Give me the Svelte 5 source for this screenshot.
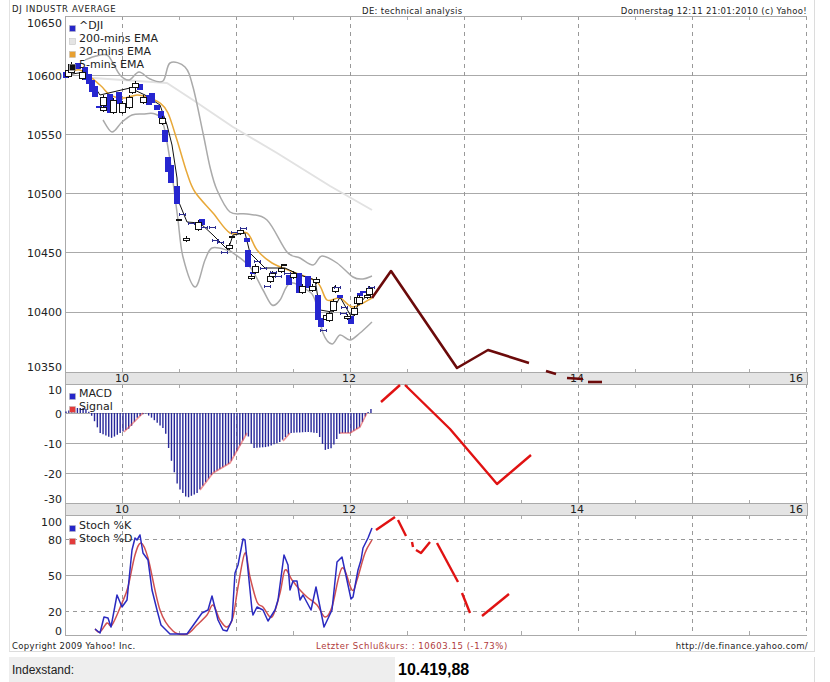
<script>
  // chart coordinates are page pixels, the svg viewBox starts at the frame's left edge
  const verticals = [122, 236, 350, 464, 578, 692, 806];
  const ticks = [179, 293, 407, 521, 635, 749];
  const panels = [[16, 372], [384, 503], [515, 635]];
  const bands = [372, 503];

  const priceGrid = [75, 134, 193, 252, 312];
  const macdGrid = [413, 443, 473];
  const priceLabels = [["10650", 27], ["10600", 80], ["10550", 139], ["10500", 198], ["10450", 257], ["10400", 316], ["10350", 371]];
  const macdLabels = [["10", 394], ["0", 418], ["-10", 448], ["-20", 478], ["-30", 503]];
  const stochLabels = [["100", 526], ["80", 544], ["50", 580], ["20", 616], ["0", 635]];
  const hours = [["10", 122], ["12", 349], ["14", 577], ["16", 796]];

  const upper = "85,60 96,56 107,55 113,63 120,75 129,80 139,72 150,79 163,81 170,63 185,67 193,87 203,133 210,167 217,190 230,212 247,214 267,220 287,252 300,258 313,265 322,256 337,263 353,277 363,279 372,276";
  const lower = "103,120 112,132 122,122 132,115 143,114 155,114 163,123 170,160 175,197 178,220 183,257 195,287 205,260 212,248 227,250 233,253 250,267 263,290 272,305 280,300 290,283 307,290 315,300 323,333 332,344 340,335 350,340 360,333 372,322";
  const ema20 = "67,75 80,70 100,85 110,95 123,98 137,95 147,97 160,103 168,113 177,140 187,173 195,192 213,213 230,233 247,233 257,250 272,263 293,272 317,282 327,300 340,298 353,307 372,298";
  const ema200 = "93,78 167,83 193,100 233,127 277,153 330,186 372,210";
  const ema5 = "66,75 85,72 100,95 130,88 145,95 160,105 167,125 172,145 177,178 178,200 187,222 200,223 213,235 228,250 233,235 245,233 250,253 265,268 285,268 300,275 315,280 320,310 332,312 340,297 352,318 358,305 372,290";

  const filled = [
    [66, 72, 78], [78, 63, 69], [85, 67, 80], [89, 74, 84], [92, 80, 92], [95, 86, 97], [99, 106, 108], [107, 106, 109],
    [110, 94, 113], [119, 92, 104], [140, 84, 90], [149, 95, 105], [152, 93, 103], [157, 105, 110], [161, 111, 118], [165, 130, 142],
    [168, 157, 172], [171, 165, 183], [177, 186, 204], [202, 219, 225], [247, 238, 242], [248, 250, 267],
    [253, 272, 274], [289, 275, 285], [299, 273, 293], [308, 276, 288], [318, 295, 320], [321, 318, 327],
    [340, 295, 298], [351, 316, 324], [360, 293, 296], [363, 291, 293]
  ];
  const hollow = [
    [68, 70, 76], [71, 64, 72], [82, 72, 78], [103, 97, 105], [103, 107, 110], [113, 100, 112], [122, 103, 112],
    [129, 97, 107], [132, 87, 92], [135, 83, 87], [143, 97, 102], [162, 118, 123], [198, 222, 229],
    [186, 238, 240], [229, 245, 248], [240, 230, 233], [251, 276, 278], [255, 266, 272], [270, 276, 281], [272, 273, 276],
    [281, 268, 271], [293, 273, 277], [302, 286, 292], [312, 286, 290], [316, 279, 282], [326, 315, 319], [329, 313, 320],
    [333, 301, 310], [335, 287, 291], [347, 316, 318], [354, 308, 314], [357, 297, 303], [359, 297, 303], [367, 295, 297], [369, 288, 294]
  ];
  const dojis = [
    [182, 214], [191, 223], [204, 227], [212, 227], [215, 240], [220, 242], [224, 252], [234, 232], [243, 228],
    [257, 261], [263, 268], [267, 286], [273, 272], [278, 276], [287, 273], [323, 330], [337, 287], [344, 307], [343, 313], [371, 287]
  ];
  const flats = [[179, 219], [232, 236], [284, 264]];

  // price forecast, broken where it runs into the band
  const forecast = ["372,298 391,271 457,368 488,350 529,363", "546,371 556,374", "567,378 583,379", "588,382 602,382"];
  const macdForecast = ["381,402 400,385", "405,385 450,429 497,484 531,455"];
  const stochForecast = ["376,530 395,517", "398,520 406,536", "412,542 413,547", "416,550 421,553 430,542", "437,543 458,582", "462,593 470,613", "482,616 509,594"];

  const macdEdge = [[65, 412], [75, 408], [85, 408], [90, 413], [93, 418], [100, 433], [112, 438], [122, 432], [130, 428], [137, 418], [145, 413], [152, 418], [165, 430], [170, 455], [178, 487], [187, 498], [197, 493], [213, 473], [230, 463], [247, 433], [253, 448], [267, 447], [280, 442], [290, 433], [307, 432], [318, 433], [325, 450], [332, 448], [340, 433], [350, 433], [360, 427], [367, 413], [372, 408]];
  // signal only shows where it leaves the bars
  const signal = ["124,432 132,424 143,413", "200,490 213,473 230,463 247,433", "283,441 290,433", "340,433 350,433 360,427 367,413"];

  function edgeAt(x) {
    for (let i = 1; i < macdEdge.length; i++) {
      const [x0, y0] = macdEdge[i - 1];
      const [x1, y1] = macdEdge[i];
      if (x <= x1) return y0 + ((y1 - y0) * (x - x0)) / (x1 - x0);
    }
    return 413;
  }
  const bars = [];
  for (let x = 66; x <= 372; x += 2.85) bars.push({ x, y: edgeAt(x) });

  const stochK = "95,629 100,633 104,617 108,618 111,627 117,595 122,607 127,600 132,550 135,538 137,540 140,535 143,553 148,560 152,590 157,610 161,625 170,634 187,634 192,627 202,613 208,610 212,596 218,620 223,630 227,631 232,620 235,573 238,565 243,539 245,540 252,610 253,615 257,607 263,610 268,621 275,610 278,600 284,555 288,565 290,590 293,581 297,581 300,600 303,595 311,610 316,587 324,627 332,610 337,562 342,557 351,599 353,597 358,570 361,560 363,548 368,538 372,528";
  const stochD = "95,629 100,632 107,623 112,625 122,603 128,587 135,555 141,543 148,558 160,610 173,631 187,634 197,625 207,615 213,605 220,620 227,627 233,617 238,587 245,553 250,577 257,602 263,607 272,617 280,593 285,570 292,580 300,590 307,597 317,605 325,617 332,607 342,568 352,590 357,580 365,553 372,540";

  // catmull-rom through the points, for the lines that are smooth in the chart
  function smooth(points) {
    const p = points.split(" ").map((s) => s.split(",").map(Number));
    let d = `M${p[0][0]} ${p[0][1]}`;
    for (let i = 0; i < p.length - 1; i++) {
      const a = p[i - 1] || p[i];
      const b = p[i];
      const c = p[i + 1];
      const e = p[i + 2] || c;
      const c1 = [b[0] + (c[0] - a[0]) / 6, b[1] + (c[1] - a[1]) / 6];
      const c2 = [c[0] - (e[0] - b[0]) / 6, c[1] - (e[1] - b[1]) / 6];
      d += `C${c1[0]} ${c1[1]} ${c2[0]} ${c2[1]} ${c[0]} ${c[1]}`;
    }
    return d;
  }

  const legends = [
    { label: "^DJI", color: "#2626c8", y: 29 },
    { label: "200-mins EMA", color: "#e4e4e4", y: 42 },
    { label: "20-mins EMA", color: "#e8a030", y: 55 },
    { label: "5-mins EMA", color: "#111", y: 68 },
    { label: "MACD", color: "#2626c8", y: 397 },
    { label: "Signal", color: "#e23a3a", y: 410 },
    { label: "Stoch %K", color: "#2626c8", y: 529 },
    { label: "Stoch %D", color: "#e23a3a", y: 542 }
  ];
</script>

<div class="page">
  <div class="frame">
    <svg viewBox="9 0 806 652" width="806" height="652">
      <!-- grid -->
      {#each priceGrid as y}<line class="grid" x1="65" x2="807" y1={y} y2={y} />{/each}
      {#each macdGrid as y}<line class="grid" x1="65" x2="807" y1={y} y2={y} />{/each}
      <line class="grid" x1="65" x2="807" y1="575" y2="575" />
      <line class="dash" x1="65" x2="807" y1="539" y2="539" />
      <line class="dash" x1="65" x2="807" y1="611" y2="611" />
      {#each panels as [top, bottom]}
        {#each verticals as x}<line class="dash" x1={x} x2={x} y1={top} y2={bottom} />{/each}
        {#each ticks as x}<line class="grid" x1={x} x2={x} y1={top} y2={top + 4} />{/each}
      {/each}
      {#each ticks as x}<line class="grid" x1={x} x2={x} y1="631" y2="635" />{/each}

      <!-- time bands -->
      {#each bands as y}
        <rect class="band" x="65" y={y} width="742" height="12" />
        {#each verticals.concat(ticks) as x}<line class="grid" x1={x} x2={x} y1={y - 3} y2={y} />{/each}
      {/each}
      {#each bands as y}
        {#each hours as [t, x]}<text class="hour" x={x} y={y + 10}>{t}</text>{/each}
      {/each}

      <line class="axis" x1="65" x2="807" y1="16" y2="16" />
      <line class="axis" x1="65" x2="807" y1="635" y2="635" />
      <line class="axis" x1="65" x2="65" y1="16" y2="635" />

      <!-- price panel -->
      <polyline class="series" stroke="#e2e2e2" stroke-width="2" points={ema200} />
      <path class="series" stroke="#aaa" stroke-width="1.5" d={smooth(upper)} />
      <path class="series" stroke="#aaa" stroke-width="1.5" d={smooth(lower)} />
      <path class="series" stroke="#e8a838" stroke-width="1.5" d={smooth(ema20)} />
      <polyline class="series" stroke="#111" stroke-width="1" points={ema5} />
      {#each filled as [x, top, bottom]}
        <rect class="crisp" x={x - 3} y={top} width="6" height={bottom - top} fill="#2626d0" />
      {/each}
      {#each hollow as [x, top, bottom]}
        <line class="crisp" x1={x} x2={x} y1={top - 2} y2={bottom + 2} stroke="#111" />
        <rect class="crisp" x={x - 3} y={top} width="6" height={bottom - top} fill="#fff" stroke="#111" />
      {/each}
      {#each dojis as [x, y]}
        <path class="crisp" d="M{x - 3} {y}h6M{x - 3} {y - 1}v3M{x + 3} {y - 1}v3" fill="none" stroke="#2c2c90" />
      {/each}
      {#each flats as [x, y]}<rect class="crisp" x={x - 3} y={y} width="6" height="2" fill="#111" />{/each}
      {#each forecast as points}
        <polyline class="series" stroke="#6b0a0a" stroke-width="2.6" points={points} />
      {/each}

      <!-- macd panel -->
      {#each bars as bar}
        <line x1={bar.x} x2={bar.x} y1="413" y2={bar.y} stroke="#27279a" stroke-width="1.4" />
      {/each}
      {#each signal as points}
        <polyline class="series" stroke="#e85050" stroke-width="1.6" opacity="0.6" points={points} />
      {/each}
      {#each macdForecast as points}
        <polyline class="series" stroke="#e01212" stroke-width="2.4" points={points} />
      {/each}

      <!-- stochastic panel -->
      <path class="series" stroke="#d05050" stroke-width="1.5" d={smooth(stochD)} />
      <polyline class="series" stroke="#2a2ac0" stroke-width="1.5" points={stochK} />
      {#each stochForecast as points}
        <polyline class="series" stroke="#e01212" stroke-width="2.4" points={points} />
      {/each}

      <!-- labels -->
      {#each priceLabels.concat(macdLabels, stochLabels) as [label, y]}
        <text class="scale" x="62" y={y}>{label}</text>
      {/each}
      {#each legends as item}
        <rect class="swatch" x="69.5" y={item.y - 3.5} width="6" height="6" fill={item.color} />
        <text class="legend" x="79" y={item.y}>{item.label}</text>
      {/each}

      <text class="tiny title" x="12" y="12">DJ INDUSTR AVERAGE</text>
      <text class="tiny mid" x="362" y="14">DE: technical analysis</text>
      <text class="tiny end mid" x="807" y="14">Donnerstag 12:11 21:01:2010 (c) Yahoo!</text>
      <text class="tiny mid" x="12" y="649">Copyright 2009 Yahoo! Inc.</text>
      <text class="tiny close" x="316" y="649">Letzter Schlußkurs: : 10603.15 (-1.73%)</text>
      <text class="tiny end mid" x="808" y="649">http://de.finance.yahoo.com/</text>
    </svg>
  </div>

  <div class="quote">
    <div class="quote-label">Indexstand:</div>
    <div class="quote-value">10.419,88</div>
  </div>
</div>

<style>
  :global(body) {
    margin: 0;
    background: #fff;
  }

  .page {
    width: 806px;
    margin-left: 9px;
    font-family: "Liberation Sans", sans-serif;
  }

  .frame {
    height: 652px;
    box-sizing: border-box;
    border-left: 1px solid #e2e2e2;
    border-right: 1px solid #dcdcdc;
    border-bottom: 1px solid #dcdcdc;
    overflow: hidden;
  }

  svg {
    display: block;
    margin-left: -1px;
  }

  .quote {
    display: flex;
    height: 25px;
    margin-top: 5px;
    border-right: 1px solid #dcdcdc;
  }

  .quote-label {
    width: 386px;
    box-sizing: border-box;
    padding-left: 3px;
    background: #eee;
    color: #222;
    font-size: 12px;
    line-height: 26px;
  }

  .quote-value {
    padding-left: 3px;
    color: #000;
    font-size: 16px;
    font-weight: bold;
    line-height: 25px;
  }

  .grid,
  .axis,
  .band,
  .crisp {
    shape-rendering: crispEdges;
  }

  .grid,
  .axis {
    stroke: #aaa;
  }

  .dash {
    stroke: #999;
    stroke-dasharray: 4 4;
    shape-rendering: crispEdges;
  }

  .band {
    fill: #e4e4e4;
    stroke: #aaa;
  }

  .series {
    fill: none;
    stroke-linejoin: round;
  }

  .swatch {
    stroke: #bbb;
    stroke-width: 0.5;
  }

  text {
    font-family: "DejaVu Sans", sans-serif;
    fill: #222;
  }

  .scale {
    font-size: 11px;
    text-anchor: end;
  }

  .hour {
    font-size: 11px;
    text-anchor: middle;
  }

  .legend {
    font-size: 11px;
  }

  .tiny {
    font-size: 8.5px;
  }

  .title {
    letter-spacing: 0.67px;
  }

  .mid {
    letter-spacing: 0.33px;
  }

  .end {
    text-anchor: end;
  }

  .close {
    fill: #b03a3a;
    letter-spacing: 0.56px;
  }
</style>
